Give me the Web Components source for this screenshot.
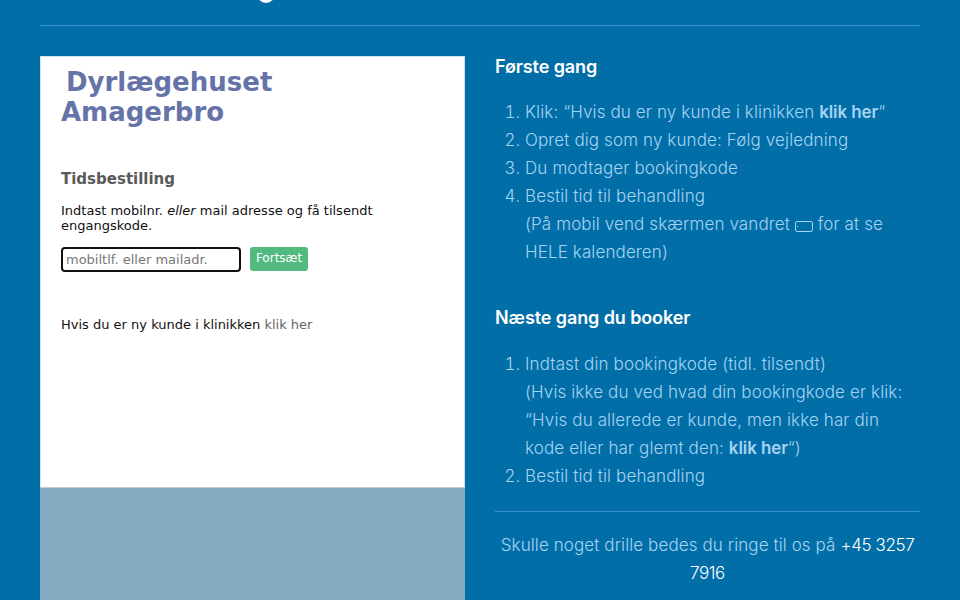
<!DOCTYPE html>
<html lang="da">
<head>
<meta charset="utf-8">
<title>Tidsbestilling</title>
<style>
  html, body { margin: 0; height: 600px; overflow: hidden; background: #026ea8; }
  li b { font-weight: 600; letter-spacing: -0.1px; }
</style>
</head>
<body>
<booking-page>
  <booking-form slot="left"></booking-form>
  <info-section slot="right" heading="Første gang">
    <ol>
      <li>Klik: “Hvis du er ny kunde i klinikken <b>klik her</b>“</li>
      <li>Opret dig som ny kunde: Følg vejledning</li>
      <li>Du modtager bookingkode</li>
      <li>Bestil tid til behandling<br>(På mobil vend skærmen vandret <svg width="18" height="11" viewBox="0 0 18 11" fill="none" stroke="currentColor" stroke-width="1" style="vertical-align:-2px"><rect x=".5" y=".5" width="17" height="10" rx="1.5"/><path d="M2.5 5v1"/></svg> for at se HELE kalenderen)</li>
    </ol>
  </info-section>
  <info-section slot="right" heading="Næste gang du booker">
    <ol>
      <li>Indtast din bookingkode (tidl. tilsendt)<br>(Hvis ikke du ved hvad din bookingkode er klik: “Hvis du allerede er kunde, men ikke har din kode eller har glemt den: <b>klik her</b>“)</li>
      <li>Bestil tid til behandling</li>
    </ol>
  </info-section>
  <contact-note slot="right" phone="+45 3257 7916">Skulle noget drille bedes du ringe til os på</contact-note>
</booking-page>

<script>
const pageTemplate = document.createElement('template');
pageTemplate.innerHTML = `
  <style>
  :host { display: block; padding: 0 40px; height: 600px; overflow: hidden; }
  .top { height: 25px; border-bottom: 1px solid #3a93c8; overflow: hidden; display: flex; padding-left: 217px; }
  .dot { width: 18px; height: 18px; margin-top: -15px; border-radius: 50%; background: #fff; }
  .main { display: grid; grid-template-columns: 425px 425px; column-gap: 30px; margin-top: 30px; }
  .right { min-width: 0; }
  </style>
  <div class="top"><div class="dot"></div></div>
  <div class="main">
    <div class="left"><slot name="left"></slot></div>
    <div class="right"><slot name="right"></slot></div>
  </div>
`;

class BookingPage extends HTMLElement {
  constructor() {
    super();
    const shadow = this.attachShadow({ mode: 'open' });
    shadow.append(pageTemplate.content.cloneNode(true));
  }
}

const formTemplate = document.createElement('template');
formTemplate.innerHTML = `
  <style>
  :host { display: block; height: 544px; background: #84aabf; font-family: "DejaVu Sans", sans-serif; }
  .card { height: 432px; box-sizing: border-box; background: #fff; padding: 11px 21px 0; border-bottom: 1px solid #c4ccd0; box-shadow: inset 1px 0 0 #cfe4f0, inset -1px 0 0 #cfe4f0, inset 0 1px 0 #cfe4f0; }
  h1 { margin: 0; font-size: 26px; line-height: 30px; font-weight: 700; color: #6673a8; }
  h1 span { padding-left: 5px; }
  h2 { margin: 42px 0 0; font-size: 15px; line-height: 20px; font-weight: 700; color: #5a5a5a; }
  p { margin: 0; font-size: 13px; line-height: 15px; color: #111; }
  .intro { margin-top: 14px; }
  form { display: flex; align-items: flex-start; gap: 9px; margin-top: 14px; }
  input { box-sizing: border-box; width: 180px; height: 25px; margin: 0; padding: 0 3px; border: 2px solid #111; border-radius: 4px; font: 13px "DejaVu Sans", sans-serif; color: #111; background: #fff; outline: none; }
  input::placeholder { color: #777; opacity: 1; }
  button { box-sizing: border-box; width: 58px; height: 24px; padding: 0 0 3px; border: 0; border-radius: 3px; background: #52b97f; color: #fff; font: 12px "DejaVu Sans", sans-serif; }
  .new { margin-top: 45px; }
  a { color: #666; text-decoration: none; }
  </style>
  <div class="card">
    <h1><span>Dyrlægehuset</span><br>Amagerbro</h1>
    <h2>Tidsbestilling</h2>
    <p class="intro">Indtast mobilnr. <em>eller</em> mail adresse og få tilsendt engangskode.</p>
    <form onsubmit="return false">
      <input type="text" placeholder="mobiltlf. eller mailadr.">
      <button type="button">Fortsæt</button>
    </form>
    <p class="new">Hvis du er ny kunde i klinikken <a href="#">klik her</a></p>
  </div>
`;

class BookingForm extends HTMLElement {
  constructor() {
    super();
    const shadow = this.attachShadow({ mode: 'open' });
    shadow.append(formTemplate.content.cloneNode(true));
  }
}

const sectionTemplate = document.createElement('template');
sectionTemplate.innerHTML = `
  <style>
  :host { display: block; font-family: Inter, sans-serif; margin-bottom: 41px; }
  :host(:last-of-type) { margin-bottom: 21px; }
  h3 { margin: 0 0 21px; font-size: 18px; line-height: 22px; font-weight: 600; color: #fff; letter-spacing: -0.1px; }
  :host(:first-of-type) h3 { margin-bottom: 20px; }
  ::slotted(ol) { margin: 0; padding-left: 30px; font-size: 17px; line-height: 28px; font-weight: 300; color: #a5d3f2; letter-spacing: 0.12px; }
  </style>
  <h3></h3>
  <slot></slot>
`;

class InfoSection extends HTMLElement {
  constructor() {
    super();
    const shadow = this.attachShadow({ mode: 'open' });
    shadow.append(sectionTemplate.content.cloneNode(true));
    shadow.querySelector('h3').textContent = this.getAttribute('heading');
  }
}

const noteTemplate = document.createElement('template');
noteTemplate.innerHTML = `
  <style>
  :host { display: block; border-top: 1px solid #3a93c8; padding-top: 19px; text-align: center; font: 300 17px/28px Inter, sans-serif; letter-spacing: 0.1px; color: #a5d3f2; }
  span { color: #fff; letter-spacing: -0.4px; }
  </style>
  <slot></slot> <span></span>
`;

class ContactNote extends HTMLElement {
  constructor() {
    super();
    const shadow = this.attachShadow({ mode: 'open' });
    shadow.append(noteTemplate.content.cloneNode(true));
    shadow.querySelector('span').textContent = this.getAttribute('phone');
  }
}

customElements.define('booking-page', BookingPage);
customElements.define('booking-form', BookingForm);
customElements.define('info-section', InfoSection);
customElements.define('contact-note', ContactNote);
</script>
</body>
</html>
